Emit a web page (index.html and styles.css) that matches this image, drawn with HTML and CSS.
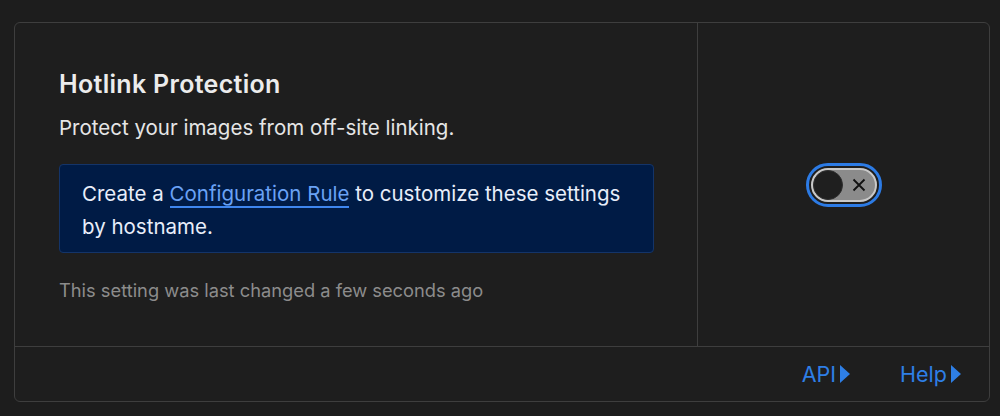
FILE: index.html
```html
<!DOCTYPE html>
<html lang="en">
<head>
<meta charset="utf-8">
<link rel="stylesheet" href="styles.css">
</head>
<body>
<div class="card">
  <div class="main">
    <div class="content">
      <h2 class="title">Hotlink Protection</h2>
      <p class="desc">Protect your images from off-site linking.</p>
      <div class="info"><span>Create a </span><a class="link" href="#">Configuration Rule</a><span> to customize these settings by hostname.</span></div>
      <p class="meta">This setting was last changed a few seconds ago</p>
    </div>
    <div class="control">
      <div class="toggle-ring">
        <div class="toggle">
          <span class="knob"></span>
          <svg class="x" width="14" height="14" viewBox="0 0 14 14"><path d="M1.5 1.5L12.5 12.5M12.5 1.5L1.5 12.5" stroke="#111" stroke-width="1.8" fill="none"/></svg>
        </div>
      </div>
    </div>
  </div>
  <div class="footer">
    <a class="flink" href="#">API<span class="tri"></span></a>
    <a class="flink" href="#">Help<span class="tri"></span></a>
  </div>
</div>
</body>
</html>
```
FILE: styles.css
```css
html, body {
  margin: 0;
  background: #1d1d1d;
}
body {
  padding: 22px 10px 14px 14px;
  font-family: Inter, "Noto Sans", sans-serif;
  color: #e6e6e6;
}
.card {
  border: 1px solid #3e3e3e;
  border-radius: 6px;
  background: #1e1e1e;
  height: 378px;
  display: flex;
  flex-direction: column;
}
.main {
  display: flex;
  height: 323px;
  border-bottom: 1px solid #3e3e3e;
}
.content {
  width: 638px;
  padding: 46px 0 0 44px;
  border-right: 1px solid #3e3e3e;
}
.title {
  margin: 0;
  font-size: 25px;
  font-weight: 600;
  line-height: 30px;
  letter-spacing: 0.3px;
  color: #ececec;
}
.desc {
  margin: 16px 0 0;
  font-size: 20.5px;
  line-height: 26px;
  color: #e6e6e6;
}
.info {
  margin-top: 23px;
  width: 549px;
  padding: 12px 22px 9px;
  background: #001b45;
  border: 1px solid #143468;
  border-radius: 4px;
  font-size: 20.5px;
  line-height: 33px;
  color: #e8eefa;
}
.link {
  color: #6aa2f5;
  text-decoration: none;
  border-bottom: 2px solid #3f86ee;
}
.meta {
  margin: 25px 0 0;
  font-size: 18.3px;
  line-height: 24px;
  color: #8c8c8c;
}
.control {
  flex: 1;
  display: flex;
  align-items: center;
  justify-content: center;
}
.toggle-ring {
  padding: 2px;
  border: 3px solid #2c7be5;
  border-radius: 26px;
}
.toggle {
  width: 66px;
  height: 34px;
  box-sizing: border-box;
  border: 2px solid #c9c9c9;
  border-radius: 18px;
  background: #8b8b8b;
  display: flex;
  align-items: center;
  justify-content: space-between;
  padding: 0 9px 0 0;
}
.knob {
  width: 28px;
  height: 28px;
  border-radius: 50%;
  background: #1f1f1f;
  border: 1px solid #2e2e2e;
}
.footer {
  flex: 1;
  display: flex;
  justify-content: flex-end;
  align-items: center;
  gap: 50px;
  padding: 0 28px 0 0;
}
.flink {
  color: #2e7fe6;
  font-size: 21.5px;
  text-decoration: none;
  display: flex;
  align-items: center;
  gap: 4px;
}
.tri {
  width: 0;
  height: 0;
  border-top: 9px solid transparent;
  border-bottom: 9px solid transparent;
  border-left: 10px solid #2e7fe6;
}
```
